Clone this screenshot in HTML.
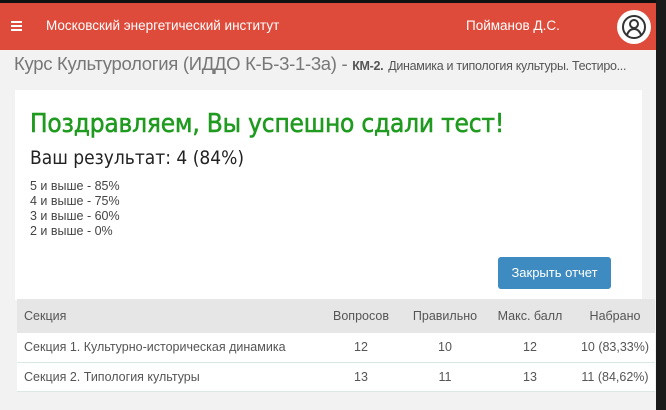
<!DOCTYPE html>
<html><head><meta charset="utf-8"><style>
*{margin:0;padding:0;box-sizing:border-box}
body{width:666px;height:410px;overflow:hidden;background:#f2f2f2;font-family:"Liberation Sans",sans-serif;position:relative}
.top{position:absolute;left:0;top:0;width:666px;height:3px;background:#111}
.rb{position:absolute;right:0;top:0;width:10px;height:410px;background:#1a1a1a}
.hdr{position:absolute;left:0;top:3px;width:656px;height:47px;background:#df4b3b;color:#fff;font-size:13.5px}
.ham{position:absolute;left:11px;top:18px;width:11px}
.ham i{display:block;height:2px;background:#fff;margin-bottom:2px}
.t1{position:absolute;left:46px;top:15px}
.t2{position:absolute;left:466px;top:15px}
.av{position:absolute;left:617px;top:7px;width:34px;height:34px;border-radius:50%;background:#fff}
.bc{position:absolute;left:14px;top:53px;font-size:18.5px;color:#777;white-space:nowrap;letter-spacing:-0.3px}
.bc b{font-size:12.5px;color:#555}
.bc span{font-size:12.5px;color:#555}
.card{position:absolute;left:15px;top:90px;width:627px;height:210px;background:#fff}
h1{position:absolute;left:15px;top:19px;font-size:26px;font-weight:normal;color:#1e9a1e;font-family:"DejaVu Sans Condensed","DejaVu Sans",sans-serif;letter-spacing:-0.2px;-webkit-text-stroke:0.5px #1e9a1e}
.res{position:absolute;left:15px;top:57px;font-size:19px;color:#222;font-family:"DejaVu Sans Condensed","DejaVu Sans",sans-serif}
.lst{position:absolute;left:15px;top:89px;font-size:12.5px;line-height:15px;color:#444}
.btn{position:absolute;left:483px;top:167px;width:113px;height:32px;background:#3d8bc0;border-radius:3px;color:#fff;font-size:13px;text-align:center;line-height:32px}
table{position:absolute;left:17px;top:299px;width:638px;border-collapse:collapse;font-size:12.5px;color:#555}
th{background:#e6e6e6;font-weight:normal;height:34px;text-align:center}
td{height:29px;border-bottom:1px solid #dce8e4;text-align:center;background:#fff}
th:first-child,td:first-child{text-align:left;padding-left:7px}
</style></head><body>
<div class="top"></div>
<div class="hdr"><div class="ham"><i></i><i></i><i></i></div><div class="t1">Московский энергетический институт</div><div class="t2">Пойманов Д.С.</div>
<div class="av"><svg width="34" height="34" viewBox="0 0 34 34"><circle cx="17" cy="17" r="11" fill="none" stroke="#333" stroke-width="2"/><circle cx="17" cy="14" r="4" fill="none" stroke="#333" stroke-width="2"/><path d="M10 25 Q12 19 17 19 Q22 19 24 25" fill="none" stroke="#333" stroke-width="2"/></svg></div></div>
<div class="rb"></div>
<div class="bc">Курс Культурология (ИДДО К-Б-3-1-3а) - <b>КМ-2.</b> <span>Динамика и типология культуры. Тестиро...</span></div>
<div class="card">
<h1>Поздравляем, Вы успешно сдали тест!</h1>
<div class="res">Ваш результат: 4 (84%)</div>
<div class="lst">5 и выше - 85%<br>4 и выше - 75%<br>3 и выше - 60%<br>2 и выше - 0%</div>
<div class="btn">Закрыть отчет</div>
</div>
<table>
<tr><th style="width:300px">Секция</th><th style="width:88px">Вопросов</th><th style="width:80px">Правильно</th><th style="width:90px">Макс. балл</th><th>Набрано</th></tr>
<tr><td>Секция 1. Культурно-историческая динамика</td><td>12</td><td>10</td><td>12</td><td>10 (83,33%)</td></tr>
<tr><td>Секция 2. Типология культуры</td><td>13</td><td>11</td><td>13</td><td>11 (84,62%)</td></tr>
</table>
</body></html>
